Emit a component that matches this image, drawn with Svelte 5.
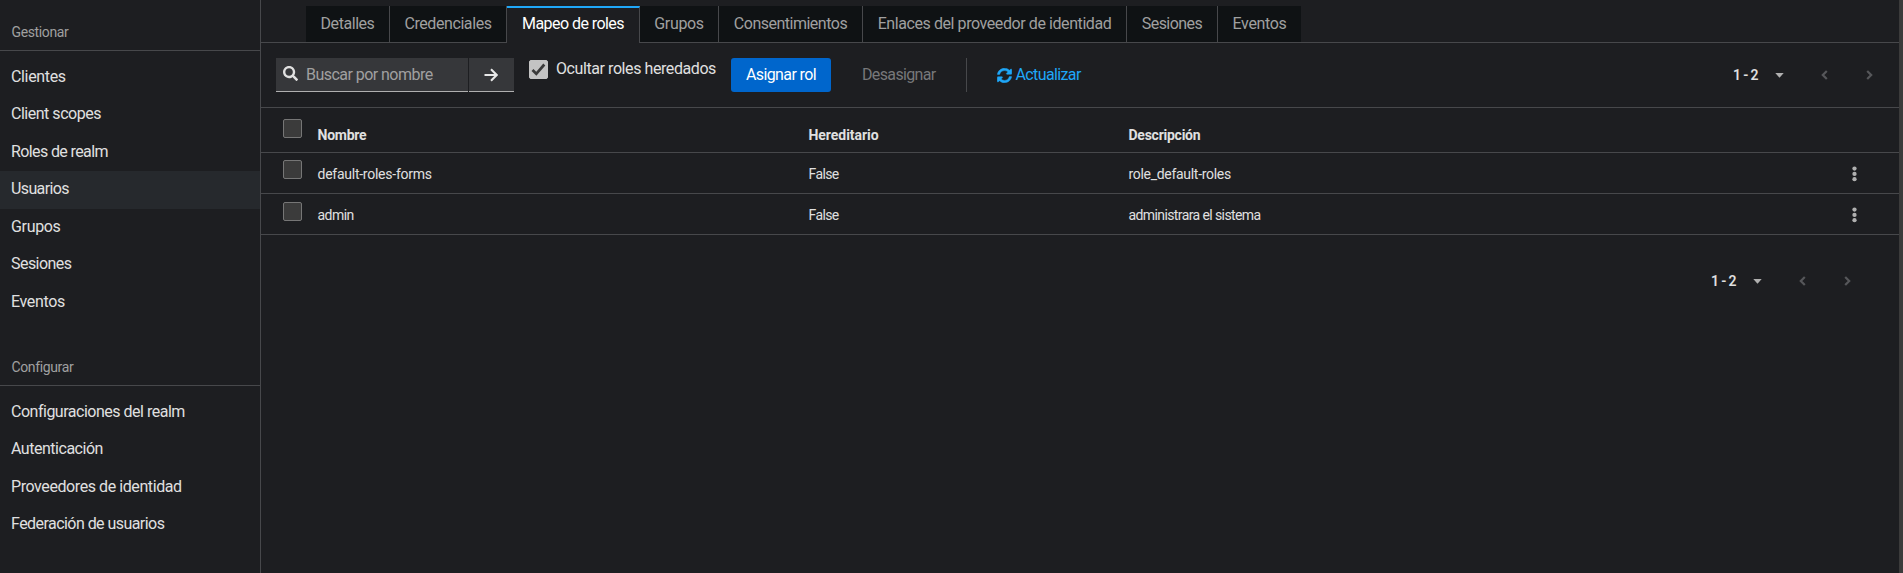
<script>
  const manage = [
    ['Clientes', -0.34], ['Client scopes', -0.48], ['Roles de realm', -0.61], ['Usuarios', -0.62],
    ['Grupos', -0.33], ['Sesiones', -0.54], ['Eventos', -0.36]
  ];
  const configure = [
    ['Configuraciones del realm', -0.49], ['Autenticación', -0.48],
    ['Proveedores de identidad', -0.42], ['Federación de usuarios', -0.55]
  ];
  const tabs = [
    ['Detalles', 84, -0.45], ['Credenciales', 117, -0.42], ['Mapeo de roles', 133, -0.55], ['Grupos', 79, -0.33],
    ['Consentimientos', 144, -0.5], ['Enlaces del proveedor de identidad', 264, -0.42], ['Sesiones', 91, -0.54], ['Eventos', 83, -0.36]
  ];
  const rows = [
    [['default-roles-forms', -0.25], ['False', -0.6], ['role_default-roles', -0.3]],
    [['admin', -0.55], ['False', -0.6], ['administrara el sistema', -0.6]]
  ];
</script>

{#snippet nav(title, items)}
  <section>
    <h2>{title}</h2>
    <ul>
      {#each items as [name, ls]}
        <li class:current={name === 'Usuarios'}><span style="letter-spacing:{ls}px">{name}</span></li>
      {/each}
    </ul>
  </section>
{/snippet}

{#snippet pager()}
  <div class="pager">
    <b>1 - 2</b>
    <svg class="caret" width="9" height="5" viewBox="0 0 9 5"><path d="M.3 0h8.4L4.5 4.8z" /></svg>
    <svg class="chev left" width="7" height="10" viewBox="0 0 7 10"><path d="M5.8 1 1.8 5l4 4" /></svg>
    <svg class="chev" width="7" height="10" viewBox="0 0 7 10"><path d="M1.2 1l4 4-4 4" /></svg>
  </div>
{/snippet}

<div class="app">
  <nav>
    {@render nav('Gestionar', manage)}
    {@render nav('Configurar', configure)}
  </nav>
  <main>
    <div class="tabs">
      {#each tabs as [name, width, ls]}
        <div class="tab" class:active={name === 'Mapeo de roles'} style="width:{width}px;letter-spacing:{ls}px">{name}</div>
      {/each}
    </div>
    <div class="toolbar">
      <div class="search">
        <svg width="15" height="15" viewBox="0 0 512 512"><path fill="#e0e0e0" d="M505 442.700 405.300 343c-4.500-4.500-10.600-7-17-7H372c27.600-35.300 44-79.700 44-128C416 93.100 322.900 0 208 0S0 93.100 0 208s93.100 208 208 208c48.300 0 92.700-16.400 128-44v16.300c0 6.400 2.500 12.500 7 17l99.700 99.700c9.400 9.400 24.600 9.400 33.900 0l28.300-28.300c9.400-9.400 9.400-24.600.100-34zM208 336c-70.700 0-128-57.200-128-128 0-70.700 57.200-128 128-128 70.700 0 128 57.200 128 128 0 70.700-57.200 128-128 128z" /></svg>
        <span>Buscar por nombre</span>
      </div>
      <div class="go"><svg width="14" height="14" viewBox="0 0 14 14"><path d="M.5 7h11.700M7 1.300 12.700 7 7 12.700" fill="none" stroke="#e8e8e8" stroke-width="2.100" /></svg></div>
      <div class="inherit">
        <span class="box checked"><svg width="15" height="13" viewBox="0 0 15 13"><path d="M1.500 7 5.300 10.800 13.300 1.500" fill="none" stroke="#3a3a3a" stroke-width="2.700" /></svg></span>
        <span class="label">Ocultar roles heredados</span>
      </div>
      <div class="assign">Asignar rol</div>
      <div class="unassign">Desasignar</div>
      <div class="divider"></div>
      <div class="refresh">
        <svg width="15" height="15" viewBox="0 0 512 512"><path fill="#1fa7f8" stroke="#1fa7f8" stroke-width="16" d="M370.720 133.280C339.458 104.008 298.888 87.962 255.848 88c-77.458.068-144.328 53.178-162.791 126.850-1.344 5.363-6.122 9.150-11.651 9.150H24.103c-7.498 0-13.194-6.807-11.807-14.176C33.933 94.924 134.813 8 256 8c66.448 0 126.791 26.136 171.315 68.685L463.030 40.970C478.149 25.851 504 36.559 504 57.941V192c0 13.255-10.745 24-24 24H345.941c-21.382 0-32.090-25.851-16.971-40.971l41.750-41.749zM32 296h134.059c21.382 0 32.090 25.851 16.971 40.971l-41.750 41.750c31.262 29.273 71.835 45.319 114.876 45.280 77.418-.070 144.315-53.144 162.787-126.849 1.344-5.363 6.122-9.150 11.651-9.150h57.304c7.498 0 13.194 6.807 11.807 14.176C478.067 417.076 377.187 504 256 504c-66.448 0-126.791-26.136-171.315-68.685L48.970 471.030C33.851 486.149 8 475.441 8 454.059V320c0-13.255 10.745-24 24-24z" /></svg>
        <span>Actualizar</span>
      </div>
      {@render pager()}
    </div>
    <div class="row head">
      <span class="box"></span><b>Nombre</b><b class="inherited">Hereditario</b><b>Descripción</b>
    </div>
    {#each rows as cells}
      <div class="row">
        <span class="box"></span>
        {#each cells as [text, ls]}<span style="letter-spacing:{ls}px">{text}</span>{/each}
        <svg class="kebab" width="5" height="16" viewBox="0 0 5 16"><circle cx="2.500" cy="2.600" r="2.150" /><circle cx="2.500" cy="7.900" r="2.150" /><circle cx="2.500" cy="13.200" r="2.150" /></svg>
      </div>
    {/each}
    <div class="bottom">{@render pager()}</div>
  </main>
  <div class="scroll"></div>
</div>

<style>
  :global(body) { background: #1d1e21; }
  .app { display: flex; height: 573px; overflow: hidden; background: #1d1e21; color: #e0e0e0; font: 16px/24px Roboto, sans-serif; white-space: nowrap; }
  nav { width: 260px; flex: none; border-right: 1px solid #47484b; }
  section { height: 335px; }
  h2 { margin: 0; height: 51px; padding: 21px 0 0 11.500px; box-sizing: border-box; border-bottom: 1px solid #47484b; font-size: 14px; line-height: 22px; font-weight: 400; letter-spacing: -0.37px; color: #a0a0a0; }
  ul { list-style: none; margin: 7.500px 0 0; padding: 0; }
  li { height: 37.500px; line-height: 36.500px; padding-left: 11px; }
  .current { background: #26292d; }
  main { flex: 1; min-width: 0; }
  .scroll { width: 4px; background: #3b3b3b; }
  .tabs { display: flex; height: 37px; margin-top: 6px; padding-left: 45px; border-bottom: 1px solid #47484b; box-sizing: border-box; }
  .tab { box-sizing: border-box; height: 36px; border-right: 1px solid #47484b; background: #0f1214; color: #a0a0a0; text-align: center; line-height: 35px; }
  .tab:last-child { border-right: 0; }
  .active { height: 37px; background: #1d1e21; color: #fff; border-top: 2px solid #1fa7f8; line-height: 31px; }
  .toolbar { display: flex; height: 65px; box-sizing: border-box; border-bottom: 1px solid #47484b; padding: 15px 0 0 15px; }
  .search, .go { height: 34px; box-sizing: border-box; background: #36373a; border-bottom: 1px solid #b0b0b0; display: flex; align-items: center; }
  .search { width: 192px; padding-left: 7px; color: #a0a0a0; gap: 8px; margin-right: 1px; letter-spacing: -0.54px; }
  .search svg { margin-top: -2px; }
  .go { width: 45px; justify-content: center; }
  .go svg { margin-left: -1px; }
  .inherit { display: flex; margin-left: 15px; width: 202px; letter-spacing: -0.42px; }
  .box { width: 19px; height: 19px; box-sizing: border-box; border: 1px solid #767676; border-radius: 2px; background: #3b3b3b; }
  .checked { background: #c3c3c3; border-color: #c3c3c3; margin-top: 2px; display: flex; align-items: center; justify-content: center; }
  .label { margin: -1px 0 0 8px; }
  .assign { width: 100px; height: 34px; line-height: 34px; border-radius: 3px; background: #06c; color: #fff; text-align: center; letter-spacing: -0.62px; }
  .unassign { width: 104px; margin-left: 31px; line-height: 34px; color: #77787a; letter-spacing: -0.64px; }
  .divider { width: 1px; height: 34px; background: #47484b; }
  .refresh { display: flex; align-items: center; gap: 3.500px; height: 34px; margin-left: 30px; color: #1fa7f8; letter-spacing: -0.62px; }
  .pager { display: flex; align-items: center; height: 34px; margin-left: auto; margin-right: 26px; font-size: 14px; }
  .pager b { width: 42px; font-weight: 600; word-spacing: -1.300px; }
  .caret { fill: #b0b0b0; }
  .chev { fill: none; stroke: #56575a; stroke-width: 2.200px; margin-left: 38px; }
  .left { margin-left: 37px; }
  .row { display: grid; grid-template-columns: 34.500px 491px 320px 723.500px 5px; padding-left: 22px; height: 41px; box-sizing: border-box; border-bottom: 1px solid #47484b; font-size: 14px; line-height: 43px; }
  .row .box { margin-top: 7px; }
  .row + .row + .row .box { margin-top: 8px; }
  .head { height: 45px; line-height: 54px; }
  .head .box { margin-top: 11px; }
  .head b { font-weight: 700; letter-spacing: -0.25px; }
  .head .inherited { letter-spacing: -0.05px; }
  .kebab { fill: #b0b0b0; margin-top: 13px; }
  .bottom { display: flex; padding: 29px 22px 0 0; }
</style>
